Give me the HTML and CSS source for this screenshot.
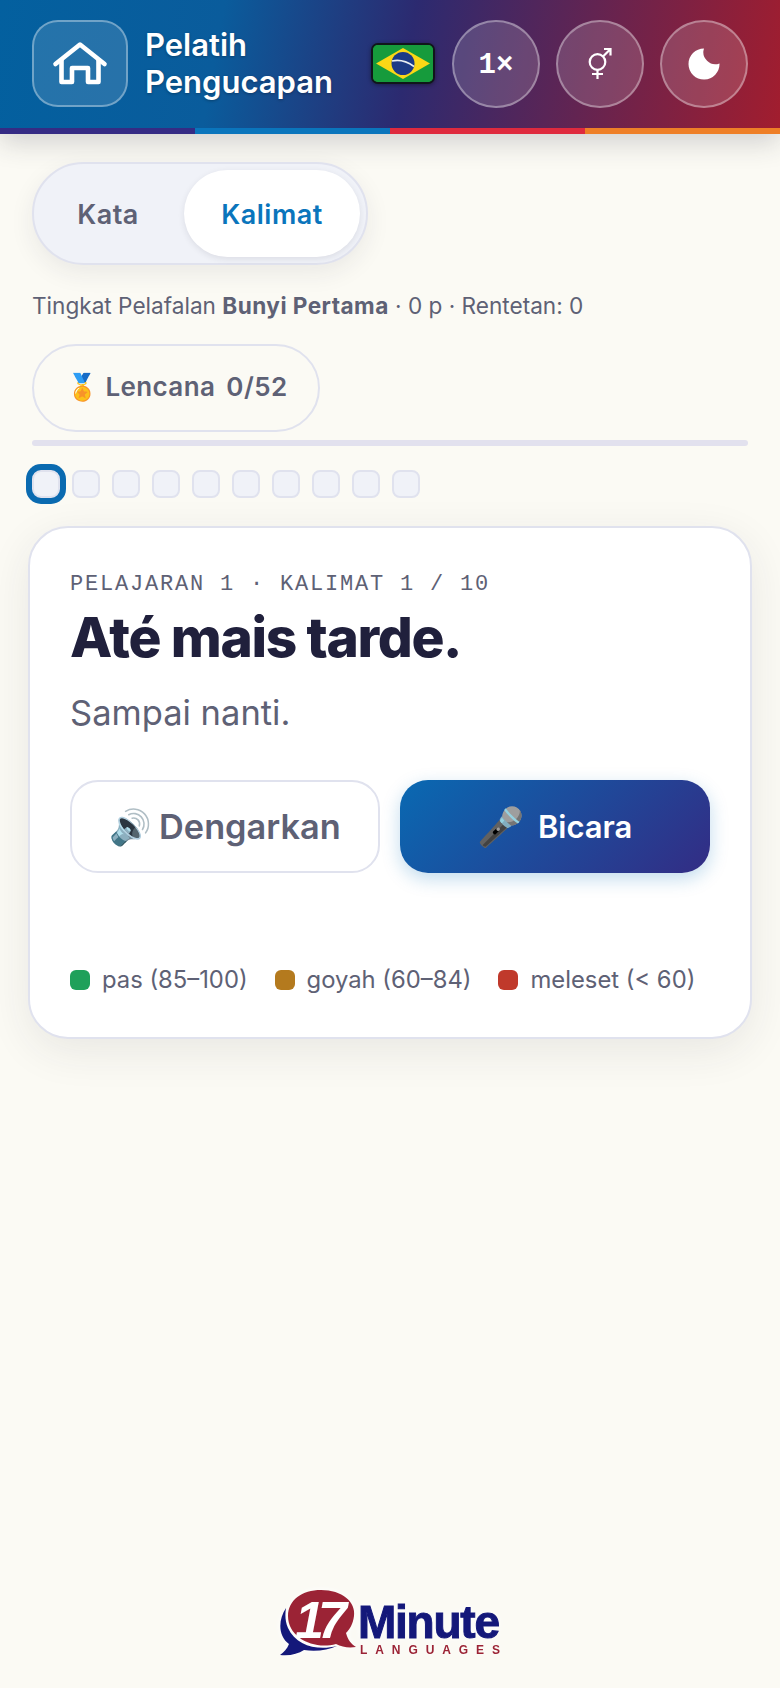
FILE: index.html
```html
<!DOCTYPE html>
<html lang="id">
<head>
    <meta charset="UTF-8">
    <title>Pelatih Pengucapan</title>
    <link rel="stylesheet" href="styles.css">
</head>
<body>
    <!-- Top bar -->
    <header class="topbar">
        <div class="topbar-row">
            <a class="home-btn">
                <svg width="56" height="46" viewBox="0 0 56 46" fill="none" stroke="#fff" stroke-width="4.6" stroke-linejoin="round" stroke-linecap="round">
                    <path d="M3.5 23 L28 3.5 L52.5 23"/>
                    <path d="M9.5 19 V41 H20 V27 H36 V41 H46.5 V19"/>
                </svg>
            </a>
            <div class="app-title">Pelatih<br>Pengucapan</div>
            <span class="flag">
                <svg width="60" height="37" viewBox="0 0 60 37">
                    <rect width="60" height="37" fill="#169b3c"/>
                    <path d="M30 3 L57 18.5 L30 34 L3 18.5 Z" fill="#fbd716"/>
                    <circle cx="30" cy="18.5" r="11.5" fill="#1c3a86"/>
                    <path d="M19 16 Q30 13.5 41 21.5" fill="none" stroke="#e8eef2" stroke-width="1.6"/>
                </svg>
            </span>
            <button class="round-btn speed">1×</button>
            <button class="round-btn">
                <svg width="30" height="34" viewBox="0 0 30 34" fill="none" stroke="#fff" stroke-width="2.2">
                    <circle cx="12.5" cy="15" r="7.8"/>
                    <path d="M12.5 22.8 V32 M7 27 H18 M18 9.5 L25 2.5 M19 2 H25.5 V8.5"/>
                </svg>
            </button>
            <button class="round-btn">
                <svg width="32" height="32" viewBox="0 0 32 32"><path d="M16 0.5 A15.5 15.5 0 1 0 31.5 15.5 A12 12 0 0 1 16 0.5 Z" fill="#fff"/></svg>
            </button>
        </div>
        <div class="stripe"><i class="s1"></i><i class="s2"></i><i class="s3"></i><i class="s4"></i></div>
    </header>

    <main class="content">
        <div class="mode-toggle">
            <button class="mode-btn">Kata</button>
            <button class="mode-btn active">Kalimat</button>
        </div>

        <p class="level">Tingkat Pelafalan <b>Bunyi Pertama</b> · 0 p · Rentetan: 0</p>

        <button class="badge-pill">
            <span class="emoji">🏅</span><span>Lencana</span><span>0/52</span>
        </button>

        <div class="progress-line"></div>

        <div class="dots">
            <span class="dot current"></span>
            <span class="dot"></span><span class="dot"></span><span class="dot"></span>
            <span class="dot"></span><span class="dot"></span><span class="dot"></span>
            <span class="dot"></span><span class="dot"></span><span class="dot"></span>
        </div>

        <section class="card">
            <div class="eyebrow">PELAJARAN 1 · KALIMAT 1 / 10</div>
            <h1 class="phrase">Até mais tarde.</h1>
            <p class="translation">Sampai nanti.</p>

            <div class="actions">
                <button class="action listen"><span class="emoji">🔊</span><span>Dengarkan</span></button>
                <button class="action speak"><span class="emoji">🎤</span><span>Bicara</span></button>
            </div>

            <div class="legend">
                <span class="legend-item"><i class="swatch good"></i>pas (85–100)</span>
                <span class="legend-item"><i class="swatch shaky"></i>goyah (60–84)</span>
                <span class="legend-item"><i class="swatch miss"></i>meleset (&lt; 60)</span>
            </div>
        </section>
    </main>

    <footer class="brand">
        <svg width="224" height="72" viewBox="0 0 224 72">
            <path d="M8 22 C0 34 0 50 11 58 C9 63 6 66 2 69 C12 70 20 68 26 64 C38 66 50 64 59 60 C40 65 18 60 10 42 C7 35 7 28 8 22 Z" fill="#14187a"/>
            <path d="M43 4 C64 4 78 16 76 30 C75 38 72 43 68 47 C70 54 73 58 78 61 C70 62 64 61 58 58 C36 64 10 52 10 30 C10 14 24 4 43 4 Z" fill="#9b2335"/>
            <text x="17" y="52" class="logo-num" textLength="52" lengthAdjust="spacing">17</text>
            <text x="80" y="52" class="logo-word" textLength="142" lengthAdjust="spacing">Minute</text>
            <text x="82" y="68" class="logo-sub" textLength="140" lengthAdjust="spacing">LANGUAGES</text>
        </svg>
    </footer>
</body>
</html>
```

FILE: styles.css
```css
* {
    box-sizing: border-box;
}

html, body {
    margin: 0;
    padding: 0;
}

body {
    width: 780px;
    height: 1688px;
    background: #fbfaf4;
    font-family: "Inter", "Noto Sans", sans-serif;
    color: #5e6175;
    display: flex;
    flex-direction: column;
    overflow: hidden;
}

button {
    font-family: inherit;
    cursor: pointer;
}

/* Top bar */
.topbar {
    background: linear-gradient(100deg, #03609f 0%, #0a5c9c 28%, #2c2a70 52%, #a21d2e 100%);
    box-shadow: 0 8px 26px rgba(40, 40, 60, 0.2);
}

.topbar-row {
    height: 128px;
    padding: 20px 32px 21px 32px;
    display: flex;
    align-items: center;
}

.home-btn {
    width: 96px;
    height: 87px;
    flex: none;
    border-radius: 26px;
    border: 2px solid rgba(255, 255, 255, 0.35);
    background: rgba(255, 255, 255, 0.13);
    display: flex;
    align-items: center;
    justify-content: center;
}

.app-title {
    margin-left: 17px;
    padding-bottom: 2px;
    flex: 1;
    font-size: 31px;
    line-height: 37px;
    font-weight: 600;
    color: #fff;
    text-shadow: 0 1px 3px rgba(0, 0, 0, 0.3);
}

.flag {
    width: 64px;
    height: 41px;
    flex: none;
    margin-right: 17px;
    background: #169b3c;
    border: 2px solid #10161a;
    border-radius: 7px;
    overflow: hidden;
    box-shadow: 0 1px 4px rgba(0, 0, 0, 0.4);
    display: flex;
}

.round-btn {
    width: 88px;
    height: 88px;
    flex: none;
    margin-left: 16px;
    border-radius: 50%;
    border: 2px solid rgba(255, 255, 255, 0.35);
    background: rgba(255, 255, 255, 0.15);
    color: #fff;
    padding: 0;
    display: flex;
    align-items: center;
    justify-content: center;
}

.flag + .round-btn {
    margin-left: 0;
}

.speed {
    padding-top: 3px;
    font-family: "Liberation Mono", monospace;
    font-size: 29px;
    font-weight: 700;
}

.stripe {
    display: flex;
    height: 6px;
}

.stripe i {
    flex: 1;
}

.s1 { background: #352b84; }
.s2 { background: #0a75bc; }
.s3 { background: #df2a3e; }
.s4 { background: #ee7f27; }

/* Main column */
.content {
    padding: 28px 28px 0;
    flex: 1;
}

.mode-toggle {
    width: 336px;
    height: 103px;
    margin-left: 4px;
    padding: 6px;
    display: flex;
    justify-content: space-between;
    background: #f0f2f8;
    border: 2px solid #e0e2ee;
    border-radius: 52px;
    box-shadow: 0 8px 24px rgba(40, 40, 60, 0.08);
}

.mode-btn {
    border: none;
    background: none;
    font-size: 27px;
    font-weight: 600;
    letter-spacing: 0.5px;
    color: #5e6175;
    width: 176px;
    border-radius: 44px;
    padding: 2px 0 0;
}

.mode-btn:first-child {
    width: 136px;
}

.mode-btn.active {
    background: #fff;
    color: #0a75bc;
    box-shadow: 0 2px 6px rgba(40, 40, 60, 0.1);
}

.level {
    margin: 27px 0 0 4px;
    font-size: 22.6px;
    line-height: 28px;
}

.level b {
    font-weight: 700;
    letter-spacing: 0.45px;
}

.badge-pill {
    margin: 24px 0 0 4px;
    width: 288px;
    height: 88px;
    display: flex;
    align-items: center;
    gap: 11px;
    padding: 0 0 3px 32px;
    background: none;
    border: 2px solid #e0e2ee;
    border-radius: 44px;
    color: #5e6175;
    font-size: 26px;
    font-weight: 600;
    letter-spacing: 0.4px;
}

.badge-pill .emoji {
    margin-right: -4px;
}

.emoji {
    font-family: "Noto Color Emoji", sans-serif;
    font-weight: 400;
    letter-spacing: 0;
}

.progress-line {
    margin: 8px 0 0 4px;
    width: 716px;
    height: 6px;
    background: #e2e1ee;
    border-radius: 3px;
}

.dots {
    margin: 24px 0 0 4px;
    display: flex;
    gap: 12px;
    height: 28px;
}

.dot {
    width: 28px;
    height: 28px;
    background: #f0f2f8;
    border: 2px solid #e0e2ee;
    border-radius: 8px;
}

.dot.current {
    box-shadow: 0 0 0 6px #0a6ab0;
    border-radius: 9px;
}

/* Phrase card */
.card {
    margin-top: 28px;
    width: 724px;
    height: 513px;
    padding: 44px 40px 0;
    background: #fff;
    border: 2px solid #e0e2ee;
    border-radius: 40px;
    box-shadow: 0 12px 44px rgba(40, 40, 60, 0.09);
}

.eyebrow {
    font-family: "Liberation Mono", monospace;
    font-size: 22px;
    line-height: 26px;
    letter-spacing: 1.8px;
}

.phrase {
    margin: 6px 0 0;
    font-size: 55px;
    line-height: 66px;
    font-weight: 800;
    letter-spacing: -1.35px;
    color: #20203c;
}

.translation {
    margin: 22px 0 0;
    font-size: 34.5px;
    line-height: 42px;
}

.actions {
    margin-top: 46px;
    display: flex;
    gap: 20px;
}

.action {
    width: 310px;
    height: 93px;
    border-radius: 28px;
    display: flex;
    align-items: center;
    justify-content: center;
    padding: 0;
}

.listen {
    gap: 7px;
    background: #fff;
    border: 2px solid #e0e2ee;
    color: #5e6175;
    font-size: 34.3px;
    font-weight: 600;
}

.speak {
    gap: 13px;
    border: none;
    background: linear-gradient(135deg, #0969b2, #332c84);
    color: #fff;
    font-size: 31px;
    font-weight: 600;
    box-shadow: 0 6px 18px rgba(10, 117, 188, 0.25);
}

.speak .emoji {
    font-size: 38px;
}

.legend {
    margin-top: 91px;
    display: flex;
    gap: 27px;
    font-size: 23.8px;
    line-height: 32px;
}

.legend-item {
    display: flex;
    align-items: center;
    gap: 12px;
    white-space: nowrap;
}

.swatch {
    width: 20px;
    height: 20px;
    border-radius: 6px;
}

.good { background: #1fa05a; }
.shaky { background: #b47a1e; }
.miss { background: #c0392b; }

/* Logo at the bottom */
.brand {
    height: 102px;
    flex: none;
    display: flex;
    justify-content: center;
}

.brand svg {
    filter: drop-shadow(0 0 3px #fff);
}

.logo-num {
    font-family: "Liberation Sans", sans-serif;
    font-size: 52px;
    font-weight: 700;
    font-style: italic;
    fill: #fff;
}

.logo-word {
    font-family: "Liberation Sans", sans-serif;
    font-size: 46px;
    font-weight: 700;
    fill: #14187a;
    stroke: #14187a;
    stroke-width: 1;
}

.logo-sub {
    font-family: "Liberation Sans", sans-serif;
    font-size: 12px;
    font-weight: 700;
    fill: #9b2335;
}
```
